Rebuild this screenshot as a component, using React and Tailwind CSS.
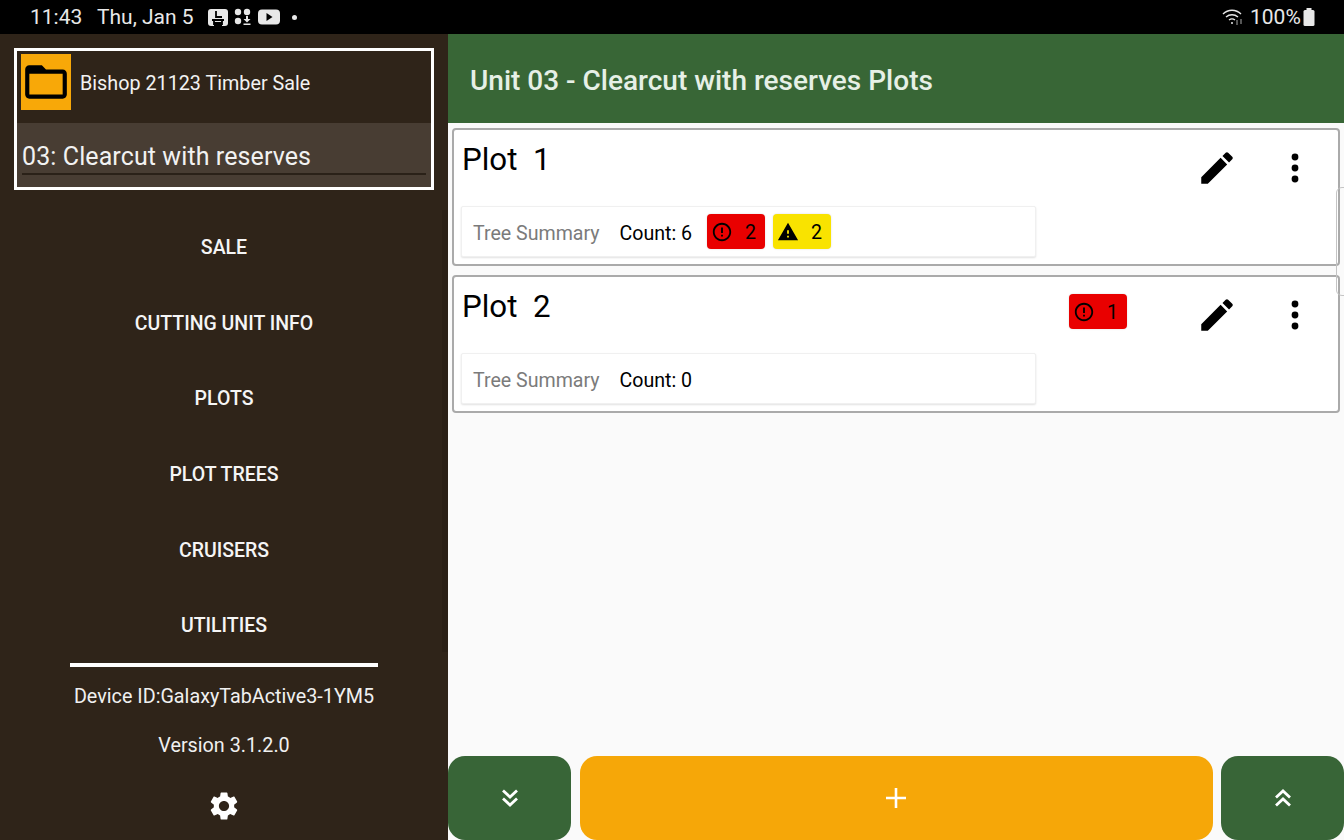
const Icon = ({ d, className }) => (
  <svg viewBox="0 0 24 24" className={className} fill="currentColor"><path d={d} /></svg>
);

const PENCIL = "M3 17.25V21h3.75L17.81 9.94l-3.75-3.75L3 17.25zM20.71 7.04c.39-.39.39-1.02 0-1.41l-2.34-2.34c-.39-.39-1.02-.39-1.41 0l-1.83 1.83 3.75 3.75 1.83-1.83z";
const ERROR = "M11 15h2v2h-2zm0-8h2v6h-2zm.99-5C6.47 2 2 6.48 2 12s4.47 10 9.99 10C17.52 22 22 17.52 22 12S17.52 2 11.99 2zM12 20c-4.42 0-8-3.58-8-8s3.58-8 8-8 8 3.58 8 8-3.58 8-8 8z";
const WARN = "M1 21h22L12 2 1 21zm12-3h-2v-2h2v2zm0-4h-2v-4h2v4z";
const FOLDER = "M20 6h-8l-2-2H4c-1.1 0-1.99.9-1.99 2L2 18c0 1.1.9 2 2 2h16c1.1 0 2-.9 2-2V8c0-1.1-.9-2-2-2zm0 12H4V8h16v10z";
const GEAR = "M19.14 12.94c.04-.3.06-.61.06-.94 0-.32-.02-.64-.07-.94l2.03-1.58c.18-.14.23-.41.12-.61l-1.92-3.32c-.12-.22-.37-.29-.59-.22l-2.39.96c-.5-.38-1.03-.7-1.62-.94l-.36-2.54c-.04-.24-.24-.41-.48-.41h-3.84c-.24 0-.43.17-.47.41l-.36 2.54c-.59.24-1.13.57-1.62.94l-2.39-.96c-.22-.08-.47 0-.59.22L2.74 8.87c-.12.21-.08.47.12.61l2.03 1.58c-.05.3-.09.63-.09.94s.02.64.07.94l-2.03 1.58c-.18.14-.23.41-.12.61l1.92 3.32c.12.22.37.29.59.22l2.39-.96c.5.38 1.03.7 1.62.94l.36 2.54c.05.24.24.41.48.41h3.84c.24 0 .44-.17.47-.41l.36-2.54c.59-.24 1.13-.56 1.62-.94l2.39.96c.22.08.47 0 .59-.22l1.92-3.32c.12-.22.07-.47-.12-.61l-2.01-1.58zM12 15.6c-1.98 0-3.6-1.62-3.6-3.6s1.62-3.6 3.6-3.6 3.6 1.62 3.6 3.6-1.62 3.6-3.6 3.6z";

const Kebab = () => (
  <svg viewBox="0 0 12 34" className="w-[12px] h-[34px]" fill="black">
    <circle cx="6" cy="6" r="3.4" /><circle cx="6" cy="17" r="3.4" /><circle cx="6" cy="28" r="3.4" />
  </svg>
);

const Badge = ({ kind, n, className = "" }) => (
  <div className={`flex items-center h-[35px] w-[58px] rounded-[4px] pl-[4px] text-[19.6px] text-black shadow-[0_0_2px_rgba(0,0,0,0.15)] ${kind === "err" ? "bg-[#e90000]" : "bg-[#f9e300]"} ${className}`}>
    <Icon d={kind === "err" ? ERROR : WARN} className="w-[22px] h-[22px] shrink-0" />
    <span className="ml-[12px] leading-none pt-[2px]">{n}</span>
  </div>
);

const Card = ({ n, count, topBadge, children }) => (
  <div className="h-[138px] rounded-[4px] border-2 border-[#aaaaaa] bg-white flex flex-col">
    <div className="h-[76px] flex items-start">
      <div className="ml-[8px] mt-[11px] text-[31.3px] leading-[38px] text-black flex-1 whitespace-pre">{`Plot  ${n}`}</div>
      {topBadge && <Badge kind="err" n="1" className="mt-[17px] mr-[69px]" />}
      <Icon d={PENCIL} className="w-[42px] h-[42px] mt-[17px] text-black" />
      <div className="ml-[51px] mr-[37px] mt-[21px]"><Kebab /></div>
    </div>
    <div className="ml-[7px] w-[575px] h-[51px] bg-white rounded-[2px] border border-[#f0f0f0] shadow-[0_1px_2px_rgba(0,0,0,0.12)] flex items-center pl-[11px] text-[19.6px]">
      <span className="text-[#7b7b7b] w-[146.500px] pt-[5px]">Tree Summary</span>
      <span className="text-black w-[87.500px] pt-[5px]">Count: {count}</span>
      {children}
    </div>
  </div>
);

const NAV = ["SALE", "CUTTING UNIT INFO", "PLOTS", "PLOT TREES", "CRUISERS", "UTILITIES"];

export default function App() {
  return (
    <div className="relative w-[1344px] h-[840px] overflow-hidden flex flex-col bg-[#fafafa] font-['Roboto',sans-serif]">
      {/* Status bar */}
      <div className="h-[34px] bg-black text-[#e8e8e8] flex items-center text-[21px] shrink-0">
        <span className="ml-[30px] w-[67px] pt-[2px]">11:43</span>
        <span className="w-[111px] pt-[2px]">Thu, Jan 5</span>
        <svg viewBox="0 0 20 17" className="w-[20px] h-[17px]">
          <rect width="20" height="17" rx="3" fill="#e8e8e8" />
          <path d="M8 2v6h6" stroke="black" strokeWidth="1.800" fill="none" />
          <path d="M4 11h12M6 11v5M14 11v5" stroke="black" strokeWidth="1.800" fill="none" />
          <rect x="6" y="13" width="8" height="4" fill="black" />
        </svg>
        <svg viewBox="0 0 18 18" className="w-[18px] h-[18px] ml-[6px]" fill="#e8e8e8">
          <circle cx="4" cy="4" r="3.200" /><circle cx="13" cy="4" r="3.200" /><circle cx="4" cy="13" r="3.200" />
          <path d="M12 8h2v3h2.500L13 14.500 9.500 11H12z" /><rect x="9.500" y="15.500" width="7" height="1.500" />
        </svg>
        <svg viewBox="0 0 22 16" className="w-[22px] h-[16px] ml-[6px]">
          <rect width="22" height="15" y="0.500" rx="4" fill="#e8e8e8" />
          <path d="M8.500 4l6 4-6 4z" fill="black" />
        </svg>
        <span className="ml-[12px] w-[5px] h-[5px] rounded-full bg-[#e8e8e8]" />
        <div className="flex-1" />
        <svg viewBox="0 0 22 18" className="w-[22px] h-[18px] mr-[6px]" fill="none" stroke="#e8e8e8" strokeWidth="1.400">
          <path d="M1 6c5-5 13-5 18 0M4 9c3.500-3 8.500-3 12 0M7 12c2-1.500 4-1.500 6 0" />
          <circle cx="10" cy="15" r="1" fill="#e8e8e8" stroke="none" />
          <path d="M15 12v5M19 11v5" strokeWidth="1" stroke="#aaaaaa" />
        </svg>
        <span className="w-[53px] pt-[2px]">100%</span>
        <svg viewBox="0 0 12 18" className="w-[12px] h-[18px] mr-[29px]" fill="#e8e8e8">
          <rect x="3.500" y="0" width="5" height="2" /><rect x="0.500" y="2" width="11" height="16" rx="1.500" />
        </svg>
      </div>

      <div className="flex flex-1 min-h-0">
        {/* Sidebar */}
        <aside className="relative w-[448px] shrink-0 bg-[#2f2419] flex flex-col text-white">
          <div className="mt-[14px] mx-[14px] h-[142px] border-[3px] border-white flex flex-col">
            <div className="h-[72px] flex items-start pl-[4px] pt-[3px]">
              <div className="w-[50px] h-[56px] bg-[#f8a808] flex items-center justify-center">
                <Icon d={FOLDER} className="w-[50px] h-[50px] text-black shrink-0" />
              </div>
              <span className="ml-[9px] mt-[18px] text-[19.75px] leading-[24px] text-[#f2f2f2]">Bishop 21123 Timber Sale</span>
            </div>
            <div className="flex-1 bg-[#483d33] px-[5px] pt-[17px]">
              <div className="h-[35px] border-b-2 border-[#2a2118] text-[25px] leading-[34px] text-[#f2f2f2] tracking-[0.1px]">03: Clearcut with reserves</div>
            </div>
          </div>
          <nav className="mt-[20px] flex flex-col">
            {NAV.map((t) => (
              <div key={t} className="h-[75.6px] flex items-center justify-center text-[19.5px] font-medium text-[#f5f5f5]">{t}</div>
            ))}
          </nav>
          <div className="mx-[70px] h-[4px] bg-white shrink-0 -mt-[1px]" />
          <div className="mt-[18px] text-center text-[19.75px] leading-[24px] text-[#f0f0f0]">Device ID:GalaxyTabActive3-1YM5</div>
          <div className="mt-[25px] text-center text-[19.75px] leading-[24px] text-[#f0f0f0]">Version 3.1.2.0</div>
          <div className="mt-[31px] flex justify-center"><Icon d={GEAR} className="w-[34px] h-[34px] text-white" /></div>
          <div className="absolute right-0 top-[176px] w-[6px] h-[442px] bg-[#2a2016]" />
        </aside>

        {/* Main */}
        <main className="flex-1 min-w-0 flex flex-col">
          <header className="h-[89px] bg-[#386636] flex items-center pl-[22px] pt-[5px] text-[28px] font-medium text-[#e6f0e6] shrink-0">
            Unit 03 - Clearcut with reserves Plots
          </header>
          <div className="flex-1 pt-[5px] pl-[4px] pr-[4px] flex flex-col gap-[9px]">
            <Card n="1" count="6">
              <div className="flex gap-[8px]">
                <Badge kind="err" n="2" />
                <Badge kind="warn" n="2" />
              </div>
            </Card>
            <Card n="2" count="0" topBadge />
          </div>
          <div className="h-[84px] flex gap-[8.500px] shrink-0">
            <div className="w-[123px] bg-[#386537] rounded-[17px] flex items-center justify-center text-white">
              <svg viewBox="0 0 20 20" className="w-[20px] h-[20px]" fill="none" stroke="white" strokeWidth="2.800"><path d="M3 2.500L10 9l7-6.500M3 10.500L10 17l7-6.500" /></svg>
            </div>
            <div className="flex-1 bg-[#f6a708] rounded-[17px] flex items-center justify-center">
              <svg viewBox="0 0 22 22" className="w-[22px] h-[22px]" stroke="white" strokeWidth="2.600"><path d="M11 1v20M1 11h20" /></svg>
            </div>
            <div className="w-[123px] bg-[#386537] rounded-[17px] flex items-center justify-center">
              <svg viewBox="0 0 20 20" className="w-[20px] h-[20px]" fill="none" stroke="white" strokeWidth="2.800"><path d="M3 9.500L10 3l7 6.500M3 17.500L10 11l7 6.500" /></svg>
            </div>
          </div>
        </main>
      </div>

      {/* edge overlay */}
      <div className="absolute right-[-6px] top-[187px] w-[14px] h-[109px] rounded-[6px] border-[1.500px] border-[#c4c4c4]" />
    </div>
  );
}
